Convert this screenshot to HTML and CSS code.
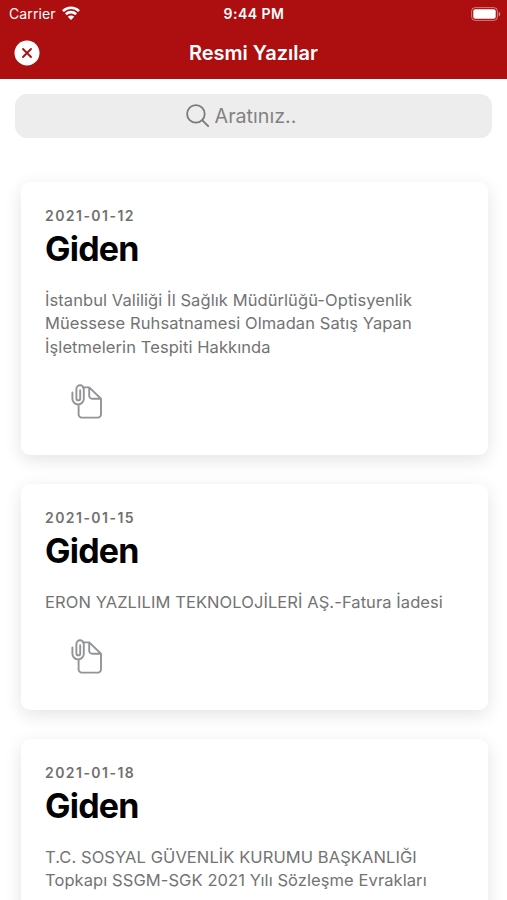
FILE: index.html
```html
<!DOCTYPE html>
<html lang="tr">
<head>
    <meta charset="UTF-8">
    <meta name="viewport" content="width=device-width, initial-scale=1">
    <title>Resmi Yazılar</title>
    <link rel="stylesheet" href="styles.css">
</head>
<body>
    <header class="header">
        <div class="status-bar">
            <div class="carrier">
                <span>Carrier</span>
                <svg class="wifi" viewBox="0 0 18 14" width="18" height="14">
                    <path d="M1 5.1a11.4 11.4 0 0 1 16 0M3.9 8.2a7.3 7.3 0 0 1 10.2 0" fill="none" stroke="#fff" stroke-width="2.6"/>
                    <path d="M9 14 5.8 10.8a4.6 4.6 0 0 1 6.4 0z" fill="#fff"/>
                </svg>
            </div>
            <span class="time">9:44 PM</span>
            <svg class="battery" viewBox="0 0 30 14" width="30" height="14">
                <rect x=".6" y=".6" width="25.8" height="12.8" rx="3.6" fill="none" stroke="#fff" stroke-opacity=".45"/>
                <rect x="2.3" y="2.3" width="22.4" height="9.4" rx="2" fill="#fff"/>
                <path d="M27.7 4.7c2 .8 2 3.8 0 4.6z" fill="#fff" fill-opacity=".5"/>
            </svg>
        </div>
        <div class="nav-bar">
            <button class="close-button" aria-label="Kapat">
                <svg viewBox="0 0 26 26" width="26" height="26">
                    <circle cx="13" cy="13" r="12.5" fill="#fff"/>
                    <path d="M9 9l8 8M17 9l-8 8" stroke="#ad0e10" stroke-width="1.9" stroke-linecap="round"/>
                </svg>
            </button>
            <h1 class="title">Resmi Yazılar</h1>
        </div>
    </header>

    <div class="search">
        <svg viewBox="0 0 24 24" width="24" height="24">
            <circle cx="9.9" cy="9.9" r="8.8" fill="none" stroke="#7a7a7a" stroke-width="1.8"/>
            <path d="M16.2 16.2l6 6" stroke="#7a7a7a" stroke-width="1.9" stroke-linecap="round"/>
        </svg>
        <span class="placeholder">Aratınız..</span>
    </div>

    <main class="list">
        <article class="card">
            <div class="date">2021-01-12</div>
            <h2 class="type">Giden</h2>
            <p class="subject">İstanbul Valiliği İl Sağlık Müdürlüğü-Optisyenlik<br>Müessese Ruhsatnamesi Olmadan Satış Yapan<br>İşletmelerin Tespiti Hakkında</p>
            <svg class="attachment" viewBox="0 0 32 36" width="32" height="36">
                <path d="M7.6 21v9.4a3.2 3.2 0 0 0 3.2 3.2h16a3.2 3.2 0 0 0 3.2-3.2V14.8L18.2 3.4h-6.4M18.2 3.4v8.4a3 3 0 0 0 3 3H30"/>
                <path d="M1.4 8.5v6.2a5.7 5.7 0 0 0 11.4 0V5a3.7 3.7 0 0 0-7.4 0v9.4a1.9 1.9 0 0 0 3.8 0V6.2"/>
            </svg>
        </article>

        <article class="card">
            <div class="date">2021-01-15</div>
            <h2 class="type">Giden</h2>
            <p class="subject">ERON YAZLILIM TEKNOLOJİLERİ AŞ.-Fatura İadesi</p>
            <svg class="attachment" viewBox="0 0 32 36" width="32" height="36">
                <path d="M7.6 21v9.4a3.2 3.2 0 0 0 3.2 3.2h16a3.2 3.2 0 0 0 3.2-3.2V14.8L18.2 3.4h-6.4M18.2 3.4v8.4a3 3 0 0 0 3 3H30"/>
                <path d="M1.4 8.5v6.2a5.7 5.7 0 0 0 11.4 0V5a3.7 3.7 0 0 0-7.4 0v9.4a1.9 1.9 0 0 0 3.8 0V6.2"/>
            </svg>
        </article>

        <article class="card">
            <div class="date">2021-01-18</div>
            <h2 class="type">Giden</h2>
            <p class="subject">T.C. SOSYAL GÜVENLİK KURUMU BAŞKANLIĞI<br>Topkapı SSGM-SGK 2021 Yılı Sözleşme Evrakları</p>
        </article>
    </main>
</body>
</html>
```
FILE: styles.css
```css
* {
    box-sizing: border-box;
}
body {
    margin: 0;
    background-color: #fff;
    font-family: Inter, "Liberation Sans", sans-serif;
}
.header {
    height: 79px;
    background-color: #ad0e10;
    color: #fff;
}
.status-bar {
    display: grid;
    grid-template-columns: 1fr auto 1fr;
    align-items: center;
    height: 27px;
    padding: 0 6px 0 9px;
    font-size: 14px;
}
.carrier {
    display: flex;
    align-items: center;
    gap: 6px;
    letter-spacing: 0.1px;
}
.wifi {
    margin-bottom: 1px;
}
.time {
    margin-right: 2px;
    font-size: 14px;
    font-weight: 600;
    letter-spacing: 0.5px;
}
.battery {
    justify-self: end;
}
.nav-bar {
    display: grid;
    grid-template-columns: 1fr auto 1fr;
    align-items: center;
    height: 52px;
    padding: 0 14px;
}
.close-button {
    width: 26px;
    height: 26px;
    padding: 0;
    border: none;
    background: none;
}
.close-button svg {
    display: block;
}
.title {
    margin: 0;
    font-size: 20px;
    font-weight: 600;
    line-height: 50px;
}
.search {
    display: flex;
    align-items: center;
    justify-content: center;
    gap: 5px;
    height: 44px;
    margin: 15px 15px 0;
    padding-right: 25px;
    border-radius: 12px;
    background-color: #ededed;
}
.placeholder {
    color: #828282;
    font-size: 19.7px;
}
.list {
    display: flex;
    flex-direction: column;
    gap: 29px;
    height: 762px;
    padding: 43.5px 19.5px 0 20.5px;
    overflow: hidden;
}
.card {
    flex: none;
    padding: 24px 24.5px 35px;
    border-radius: 9px;
    background-color: #fff;
    box-shadow: 0 5px 18px rgba(0, 0, 0, 0.11);
}
.date {
    color: #707070;
    font-size: 14px;
    font-weight: 600;
    line-height: 20px;
    letter-spacing: 1.45px;
}
.type {
    margin: 0;
    color: #000;
    font-size: 34px;
    font-weight: 700;
    line-height: 46px;
    letter-spacing: -0.8px;
}
.subject {
    margin: 17px 0 24.5px;
    color: #737373;
    font-size: 16.5px;
    line-height: 23.5px;
    letter-spacing: 0.08px;
    white-space: nowrap;
}
.attachment {
    display: block;
    margin-left: 26px;
    fill: none;
    stroke: #929497;
    stroke-width: 1.9;
    stroke-linecap: round;
    stroke-linejoin: round;
}
```
